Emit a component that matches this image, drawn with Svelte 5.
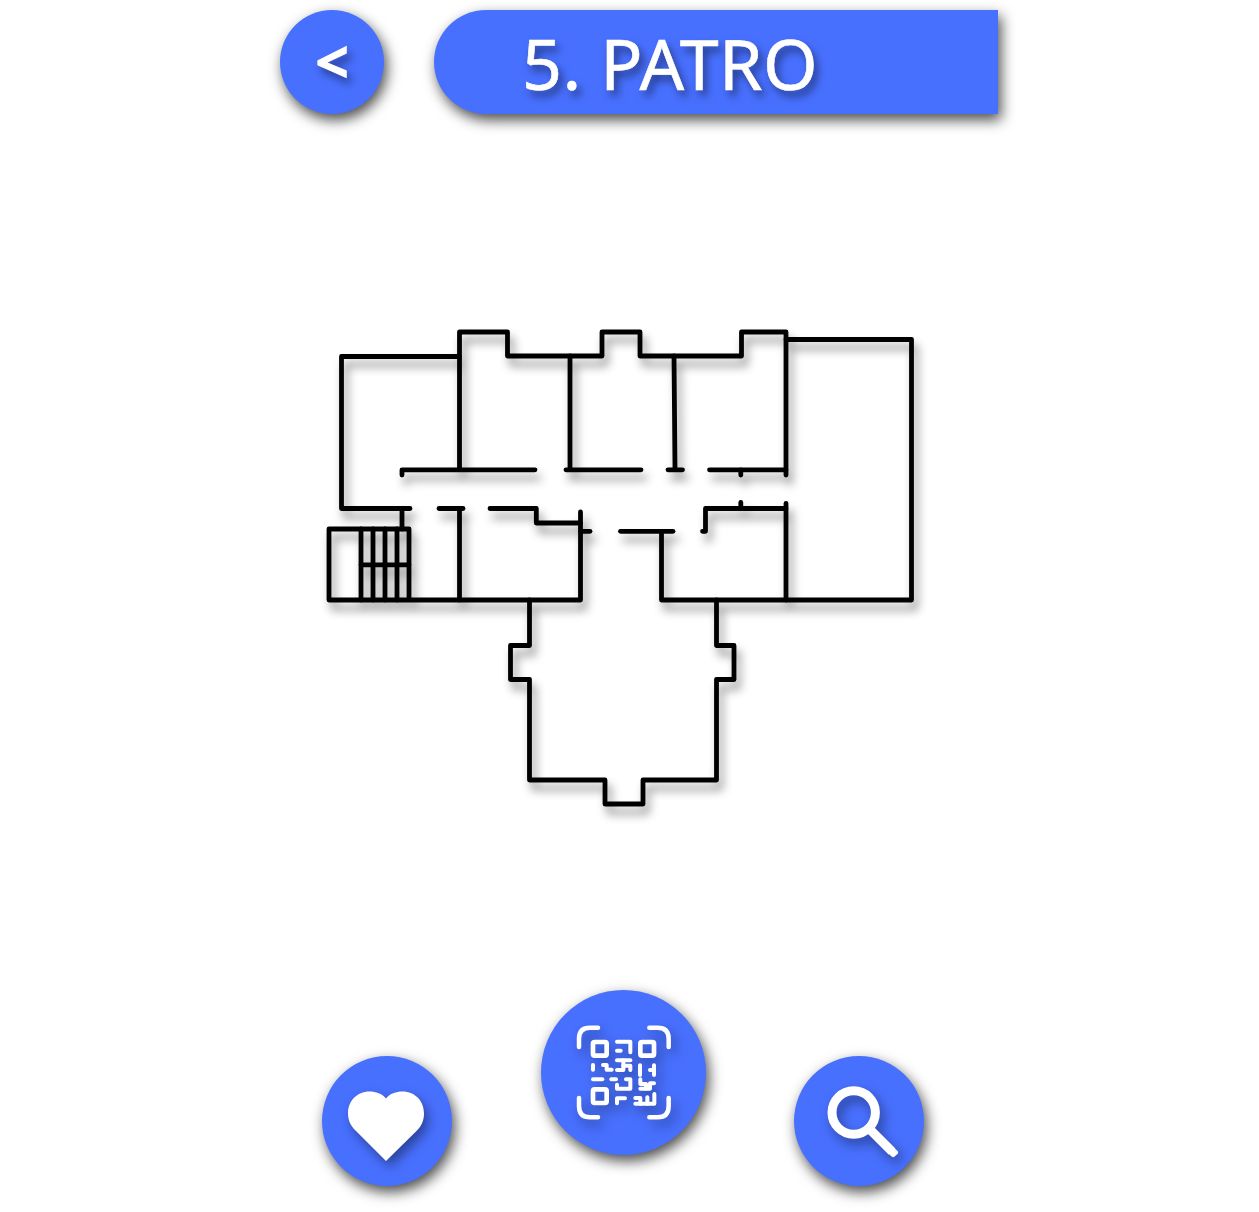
<script>
  const walls = [
    // upper outline
    'M459.5 356.5H341.5V508.5H410',
    'M459.5 469V332H507.500V356H602V332H640V356H741.500V332H786V475',
    'M786 339.500H911.500V600H661.500V531.500',
    'M570 356V469', 'M674 356L675 469',
    // corridor
    'M402 475V469.800H535', 'M566 469.800H641', 'M668 469.800H682.500', 'M709.500 469.800H786', 'M740.800 470V475',
    'M439 508.500H463', 'M490 508.500H536.300V523H580.500',
    'M580.500 512V600H329V529H409V600', 'M580.500 531.300H590', 'M620.500 531.300H673', 'M702.500 531.300H705.500V508.500H786',
    'M740.800 502.500V508.500', 'M786 503.500V600', 'M459.500 508.500V600', 'M402 508.500V529',
    // staircase
    'M361 529V600', 'M373 529V600', 'M385 529V600', 'M397 529V600', 'M361 564.800H409',
    // lower room
    'M529.500 600V645.500H510.500V679.500H529.500V780H605V804H643V780H716.500V679.500H734V645.500H716.500V600'
  ];
  const modules = [
    'M141 71H181V103', 'M141 98H152',
    'M141 127H181', 'M160 127V156H141', 'M160 143H181V156',
    'M69 141V155', 'M99 141H110V155H125', 'M69 184H97', 'M124 184H138',
    'M168 184H181V212H141V200', 'M141 241H165M141 241V256',
    'M210 142V171', 'M252 142V171M240 156H252',
    'M211 184V198H228V212H211', 'M228 212H240V196H252',
    'M196 257H253V228', 'M196 240H211V257', 'M232 238V257'
  ];
</script>

<div class="app">
  <header>
    <button class="round back" aria-label="Back"><span>&lt;</span></button>
    <h1>5. PATRO</h1>
  </header>

  <main>
    <svg class="plan" viewBox="320 322 600 492" aria-label="Floor plan">
      {#each walls as d}<path {d} />{/each}
    </svg>
  </main>

  <nav>
    <button class="round side" aria-label="Favourites">
      <svg class="icon" viewBox="0 0 130 130">
        <path fill="#fff" d="M64 42.500C68 37.500 74 35.500 80.500 35.500C93 35.500 102 45 102 57.500C102 64.500 99.500 70 95 74.500L64 105L34 75C29 70.500 26 64.500 26 57.500C26 45 35 35.500 47.500 35.500C54 35.500 60 37.500 64 42.500Z" />
      </svg>
    </button>
    <button class="round scan" aria-label="Scan code">
      <svg class="icon qr" viewBox="0 0 324 324">
        <path d="M27 87V62Q27 29 60 29H84M238 29H263Q296 29 296 62V87M27 240V264Q27 298 60 298H84M238 298H263Q296 298 296 264V240" />
        <g class="finder">
          <rect x="69" y="72" width="41" height="41" rx="5" />
          <rect x="211" y="72" width="41" height="41" rx="5" />
          <rect x="69" y="214" width="41" height="41" rx="5" />
        </g>
        <g class="module">
          {#each modules as d}<path {d} />{/each}
        </g>
      </svg>
    </button>
    <button class="round side" aria-label="Search">
      <svg class="icon" viewBox="0 0 130 130">
        <circle cx="59.700" cy="56.500" r="21.700" fill="none" stroke="#fff" stroke-width="9" />
        <path d="M76.500 74L98 95.500" stroke="#fff" stroke-width="9" />
        <path d="M100.500 92L104 95.500Q104.500 97 103.500 98L100 101Q98.500 101.500 97 100L93 96Z" fill="#fff" />
      </svg>
    </button>
  </nav>
</div>

<style>
  :global(body) { margin: 0; background: #fff; }
  .app {
    box-sizing: border-box;
    width: 1259px;
    height: 1212px;
    display: flex;
    flex-direction: column;
    overflow: hidden;
    padding-top: 10px;
    font-family: "Noto Sans", sans-serif;
    color: #fff;
  }
  header { display: flex; gap: 50px; height: 104px; padding-left: 280px; }
  .round {
    display: grid;
    place-items: center;
    flex: none;
    padding: 0;
    border: 0;
    border-radius: 50%;
    background: #4870ff;
    color: #fff;
    font-family: inherit;
    box-shadow: 3px 6px 14px rgba(0, 0, 0, .7);
  }
  .back { width: 104px; height: 104px; font-size: 60px; font-weight: 800; line-height: 102px; }
  .back span { display: block; height: 104px; text-shadow: 4px 6px 8px rgba(0, 0, 0, .45); }
  h1 {
    box-sizing: border-box;
    width: 564px;
    height: 104px;
    margin: 0;
    padding-left: 88px;
    border-radius: 52px 0 0 52px;
    background: #4870ff;
    box-shadow: 3px 6px 14px rgba(0, 0, 0, .7);
    font-size: 70px;
    font-weight: 400;
    letter-spacing: .4px;
    -webkit-text-stroke: .6px #fff;
    line-height: 107px;
    white-space: nowrap;
    text-shadow: 4px 6px 9px rgba(0, 0, 0, .5);
  }
  main { padding: 208px 0 0 320px; height: 492px; }
  .plan {
    display: block;
    width: 600px;
    height: 492px;
    overflow: visible;
    fill: none;
    stroke: #000;
    stroke-width: 4.8;
    stroke-linecap: round;
    stroke-linejoin: round;
    filter: drop-shadow(4px 8px 5px rgba(0, 0, 0, .42));
  }
  nav { display: flex; align-items: flex-start; padding: 176px 0 0 322px; }
  .side { width: 130px; height: 130px; margin-top: 66px; }
  .scan { width: 165px; height: 165px; margin: 0 88px 0 89px; }
  .icon {
    display: block;
    width: 130px;
    height: 130px;
    overflow: visible;
    filter: drop-shadow(4px 6px 6px rgba(0, 0, 0, .4));
  }
  .qr {
    width: 108px;
    height: 108px;
    margin-top: -1px;
    fill: none;
    stroke: #fff;
    stroke-width: 13.500;
    stroke-linecap: round;
  }
  .finder { stroke-width: 14; }
  .module { stroke-width: 12; stroke-linejoin: round; }
</style>
